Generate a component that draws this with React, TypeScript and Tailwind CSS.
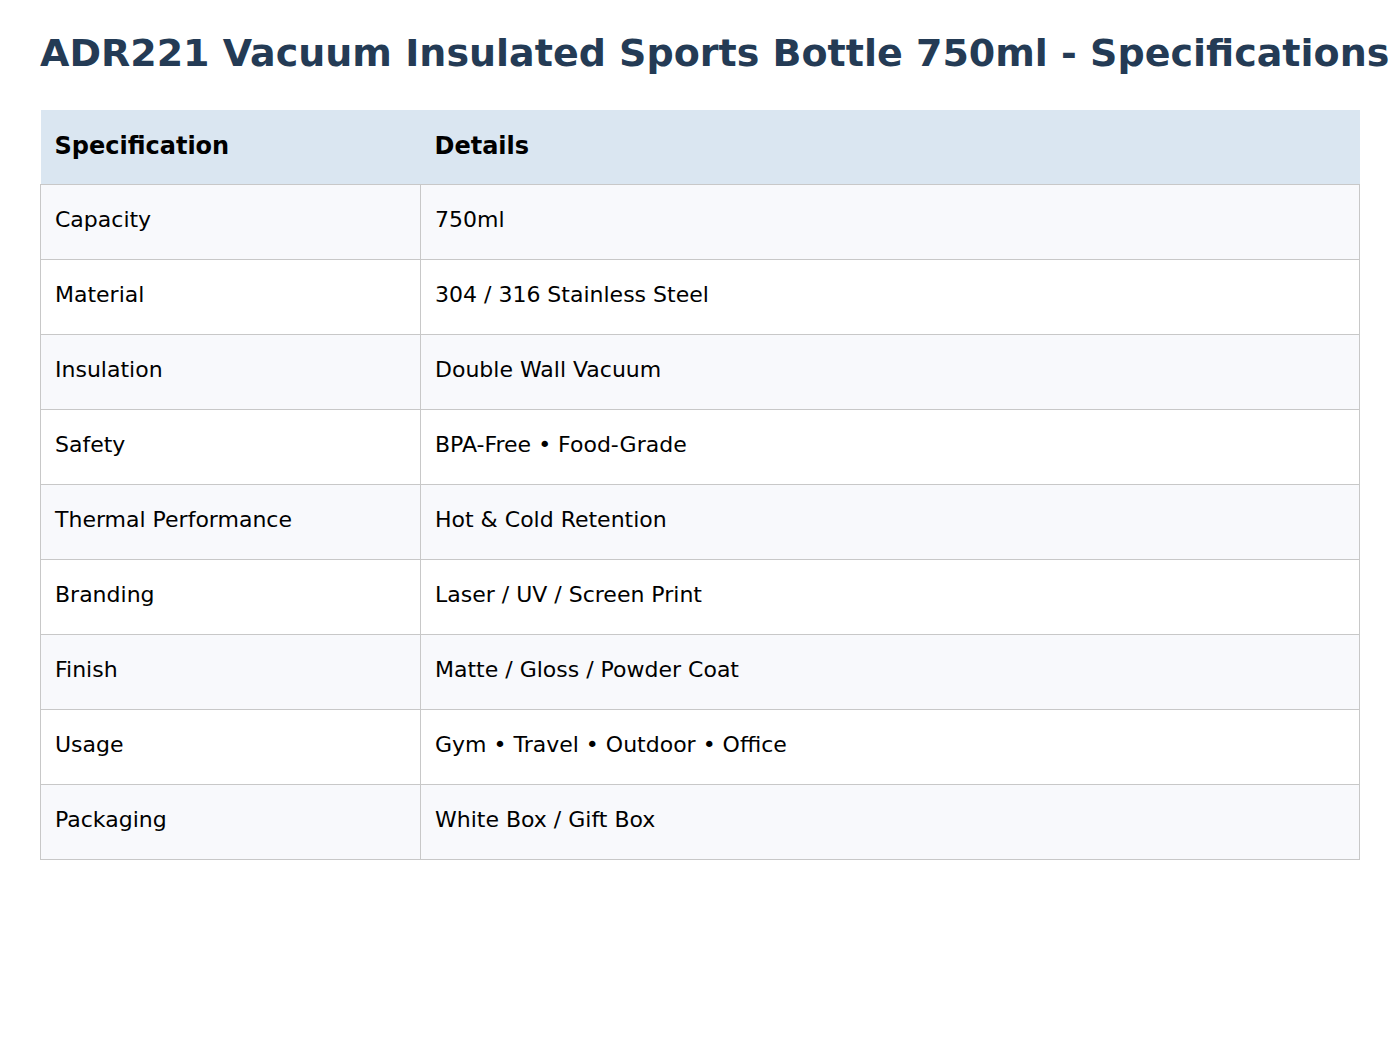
const specs: [string, string][] = [
  ["Capacity", "750ml"],
  ["Material", "304 / 316 Stainless Steel"],
  ["Insulation", "Double Wall Vacuum"],
  ["Safety", "BPA-Free • Food-Grade"],
  ["Thermal Performance", "Hot & Cold Retention"],
  ["Branding", "Laser / UV / Screen Print"],
  ["Finish", "Matte / Gloss / Powder Coat"],
  ["Usage", "Gym • Travel • Outdoor • Office"],
  ["Packaging", "White Box / Gift Box"],
];

export default function App() {
  return (
    <div
      className="min-h-screen bg-white px-10 pt-[31px] text-black"
      style={{ fontFamily: '"DejaVu Sans", Verdana, sans-serif' }}
    >
      <h1 className="text-[38px] font-bold leading-[1.2] text-[#243b55] whitespace-nowrap">
        ADR221 Vacuum Insulated Sports Bottle 750ml - Specifications
      </h1>

      <table className="mt-[33px] w-[1320px] border-collapse text-[22px]">
        <thead>
          <tr className="h-[75px] bg-[#dae6f1] text-[24px]">
            <th className="w-[380px] px-[14px] pt-[17px] text-left align-top font-bold leading-[1.6]">
              Specification
            </th>
            <th className="px-[14px] pt-[17px] text-left align-top font-bold leading-[1.6]">
              Details
            </th>
          </tr>
        </thead>
        <tbody>
          {specs.map(([label, value], i) => (
            <tr
              key={label}
              className={`h-[75px] ${i % 2 === 0 ? "bg-[#f8f9fc]" : "bg-white"}`}
            >
              <td className="border border-[#c8c8c8] px-[14px] pt-[17px] align-top leading-[1.6]">
                {label}
              </td>
              <td className="border border-[#c8c8c8] px-[14px] pt-[17px] align-top leading-[1.6]">
                {value}
              </td>
            </tr>
          ))}
        </tbody>
      </table>
    </div>
  );
}
